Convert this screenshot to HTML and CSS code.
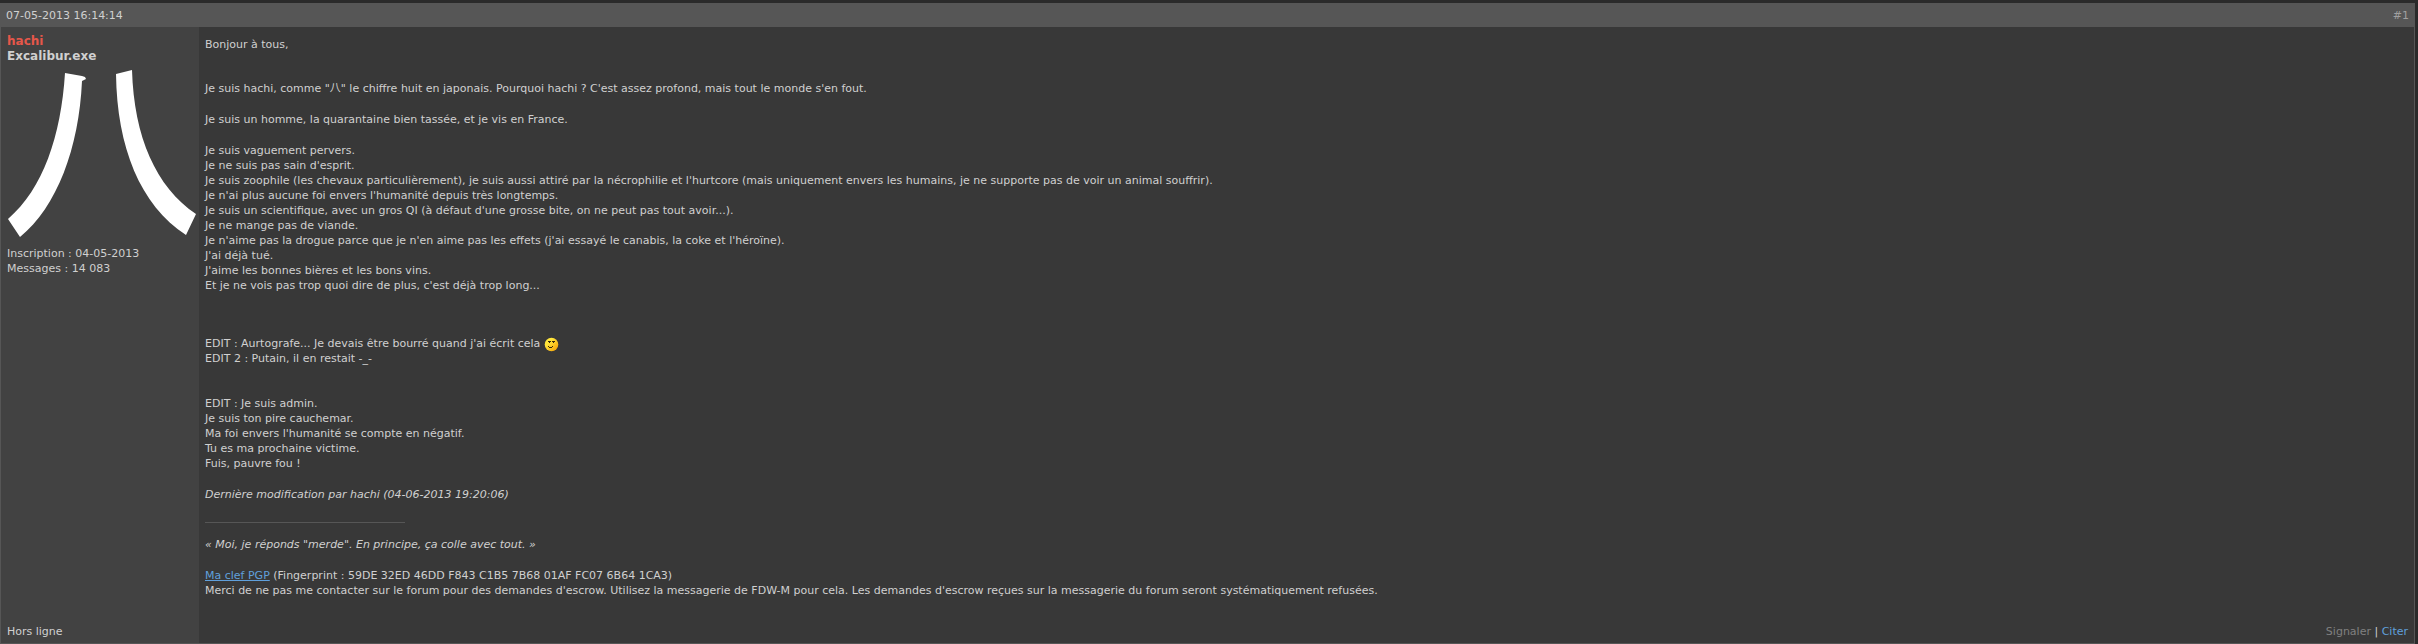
FILE: index.html
```html
<!DOCTYPE html>
<html lang="fr">
<head>
    <meta charset="UTF-8">
    <meta name="viewport" content="width=device-width, initial-scale=1.0">
    <title>Présentation de hachi</title>
    <link rel="stylesheet" href="styles.css">
</head>
<body>
    <article class="post">
        <header class="post-header">
            <time datetime="2013-05-07T16:14:14">07-05-2013 16:14:14</time>
            <a class="post-number" href="#p1">#1</a>
        </header>
        <div class="post-main">
            <!-- author column -->
            <aside class="post-author">
                <a class="username" href="#">hachi</a>
                <strong class="user-title">Excalibur.exe</strong>
                <svg class="avatar" viewBox="0 0 190 168" role="img" aria-label="Avatar de hachi">
                    <path d="M58 3 L75 6 L78 7 L79 9 L77 10 L75 11 C72 78 50 137 13 167 L1 149 C36 119 54 66 58 3Z"/>
                    <path d="M109 4 L125 0 C127 67 149 117 189 144 L179 165 C133 135 110 77 109 4Z"/>
                </svg>
                <p>Inscription : 04-05-2013</p>
                <p>Messages : 14 083</p>
                <p class="status">Hors ligne</p>
            </aside>
            <div class="post-body">
                <div class="post-message">
                    <p class="greeting">Bonjour à tous,</p>
                    <p>Je suis hachi, comme "<span class="kanji" lang="zh">八</span>" le chiffre huit en japonais. Pourquoi hachi ? C'est assez profond, mais tout le monde s'en fout.</p>
                    <p>Je suis un homme, la quarantaine bien tassée, et je vis en France.</p>
                    <p class="about">
                        Je suis vaguement pervers.<br>
                        Je ne suis pas sain d'esprit.<br>
                        Je suis zoophile (les chevaux particulièrement), je suis aussi attiré par la nécrophilie et l'hurtcore (mais uniquement envers les humains, je ne supporte pas de voir un animal souffrir).<br>
                        Je n'ai plus aucune foi envers l'humanité depuis très longtemps.<br>
                        Je suis un scientifique, avec un gros QI (à défaut d'une grosse bite, on ne peut pas tout avoir...).<br>
                        Je ne mange pas de viande.<br>
                        Je n'aime pas la drogue parce que je n'en aime pas les effets (j'ai essayé le canabis, la coke et l'héroïne).<br>
                        J'ai déjà tué.<br>
                        J'aime les bonnes bières et les bons vins.<br>
                        Et je ne vois pas trop quoi dire de plus, c'est déjà trop long...
                    </p>
                    <p>
                        EDIT : Aurtografe... Je devais être bourré quand j'ai écrit cela
                        <svg class="smiley" viewBox="0 0 15 15" role="img" aria-label="sourire">
                            <defs>
                                <linearGradient id="face" x1="0" y1="0" x2="1" y2="1">
                                    <stop offset="0.3" stop-color="#ffe63c"/>
                                    <stop offset="1" stop-color="#f59a00"/>
                                </linearGradient>
                            </defs>
                            <circle cx="7.5" cy="7.5" r="6.8" fill="url(#face)"/>
                            <path d="M4 4h3v1H4zM8 4h3v1H8zM5 5h1v1H5zM9 5h1v1H9zM4 9h1v1H4zM5 10h3v1H5zM8 9h1v1H8z" fill="#33260a"/>
                        </svg><br>
                        EDIT 2 : Putain, il en restait -_-<br>
                        <br>
                        <br>
                        EDIT : Je suis admin.<br>
                        Je suis ton pire cauchemar.<br>
                        Ma foi envers l'humanité se compte en négatif.<br>
                        Tu es ma prochaine victime.<br>
                        Fuis, pauvre fou !
                    </p>
                    <p><em>Dernière modification par hachi (04-06-2013 19:20:06)</em></p>
                </div>
                <div class="post-signature">
                    <hr>
                    <p><em>« Moi, je réponds "merde". En principe, ça colle avec tout. »</em></p>
                    <p>
                        <a class="pgp" href="#">Ma clef PGP</a> (Fingerprint : 59DE 32ED 46DD F843 C1B5 7B68 01AF FC07 6B64 1CA3)<br>
                        Merci de ne pas me contacter sur le forum pour des demandes d'escrow. Utilisez la messagerie de FDW-M pour cela. Les demandes d'escrow reçues sur la messagerie du forum seront systématiquement refusées.
                    </p>
                </div>
                <footer class="post-actions">
                    <a class="report" href="#">Signaler</a> | <a href="#">Citer</a>
                </footer>
            </div>
        </div>
    </article>
</body>
</html>
```

FILE: styles.css
```css
* { margin: 0; padding: 0; box-sizing: border-box; }
body { font: 11px/15px Verdana, "DejaVu Sans", "Noto Sans CJK SC", sans-serif; color: #d0d0d0; background: #2a2a2a; padding: 3px 3px 0 0; }
a { color: #60a0dc; text-decoration: none; }

.post { border: 1px solid #565656; border-top: none; background: #383838; }
.post-header { display: flex; justify-content: space-between; align-items: center; height: 24px; padding: 0 5px; background: #565656; }
.post-number { color: #a0a0a0; }
.post-main { display: flex; }

/* author column */
.post-author { display: flex; flex-direction: column; flex: 0 0 198px; padding: 7px 2px 4px 6px; background: #424242; }
.username, .user-title { font-size: 12px; font-weight: bold; }
.username { color: #e6574a; }
.avatar { width: 190px; height: 168px; margin: 6px 0 8px; fill: #fff; }
.status { margin-top: auto; }

/* message */
.post-body { flex: 1; display: flex; flex-direction: column; padding: 10px 6px 4px; }
.post-message p { margin-bottom: 16px; }
.post-message .greeting { margin-bottom: 29px; }
.post-message .about { margin-bottom: 43px; }
.kanji { font-family: "Noto Sans CJK SC", sans-serif; line-height: 1; }
.smiley { width: 15px; height: 15px; margin: -2px 0; vertical-align: -3px; }

.post-signature hr { width: 200px; height: 1px; margin: 4px 0 14px; border: none; background: #565656; }
.post-signature p { margin-bottom: 16px; }
.pgp { text-decoration: underline; }
.post-actions { margin-top: 10px; text-align: right; }
.report { color: #808080; }
```
